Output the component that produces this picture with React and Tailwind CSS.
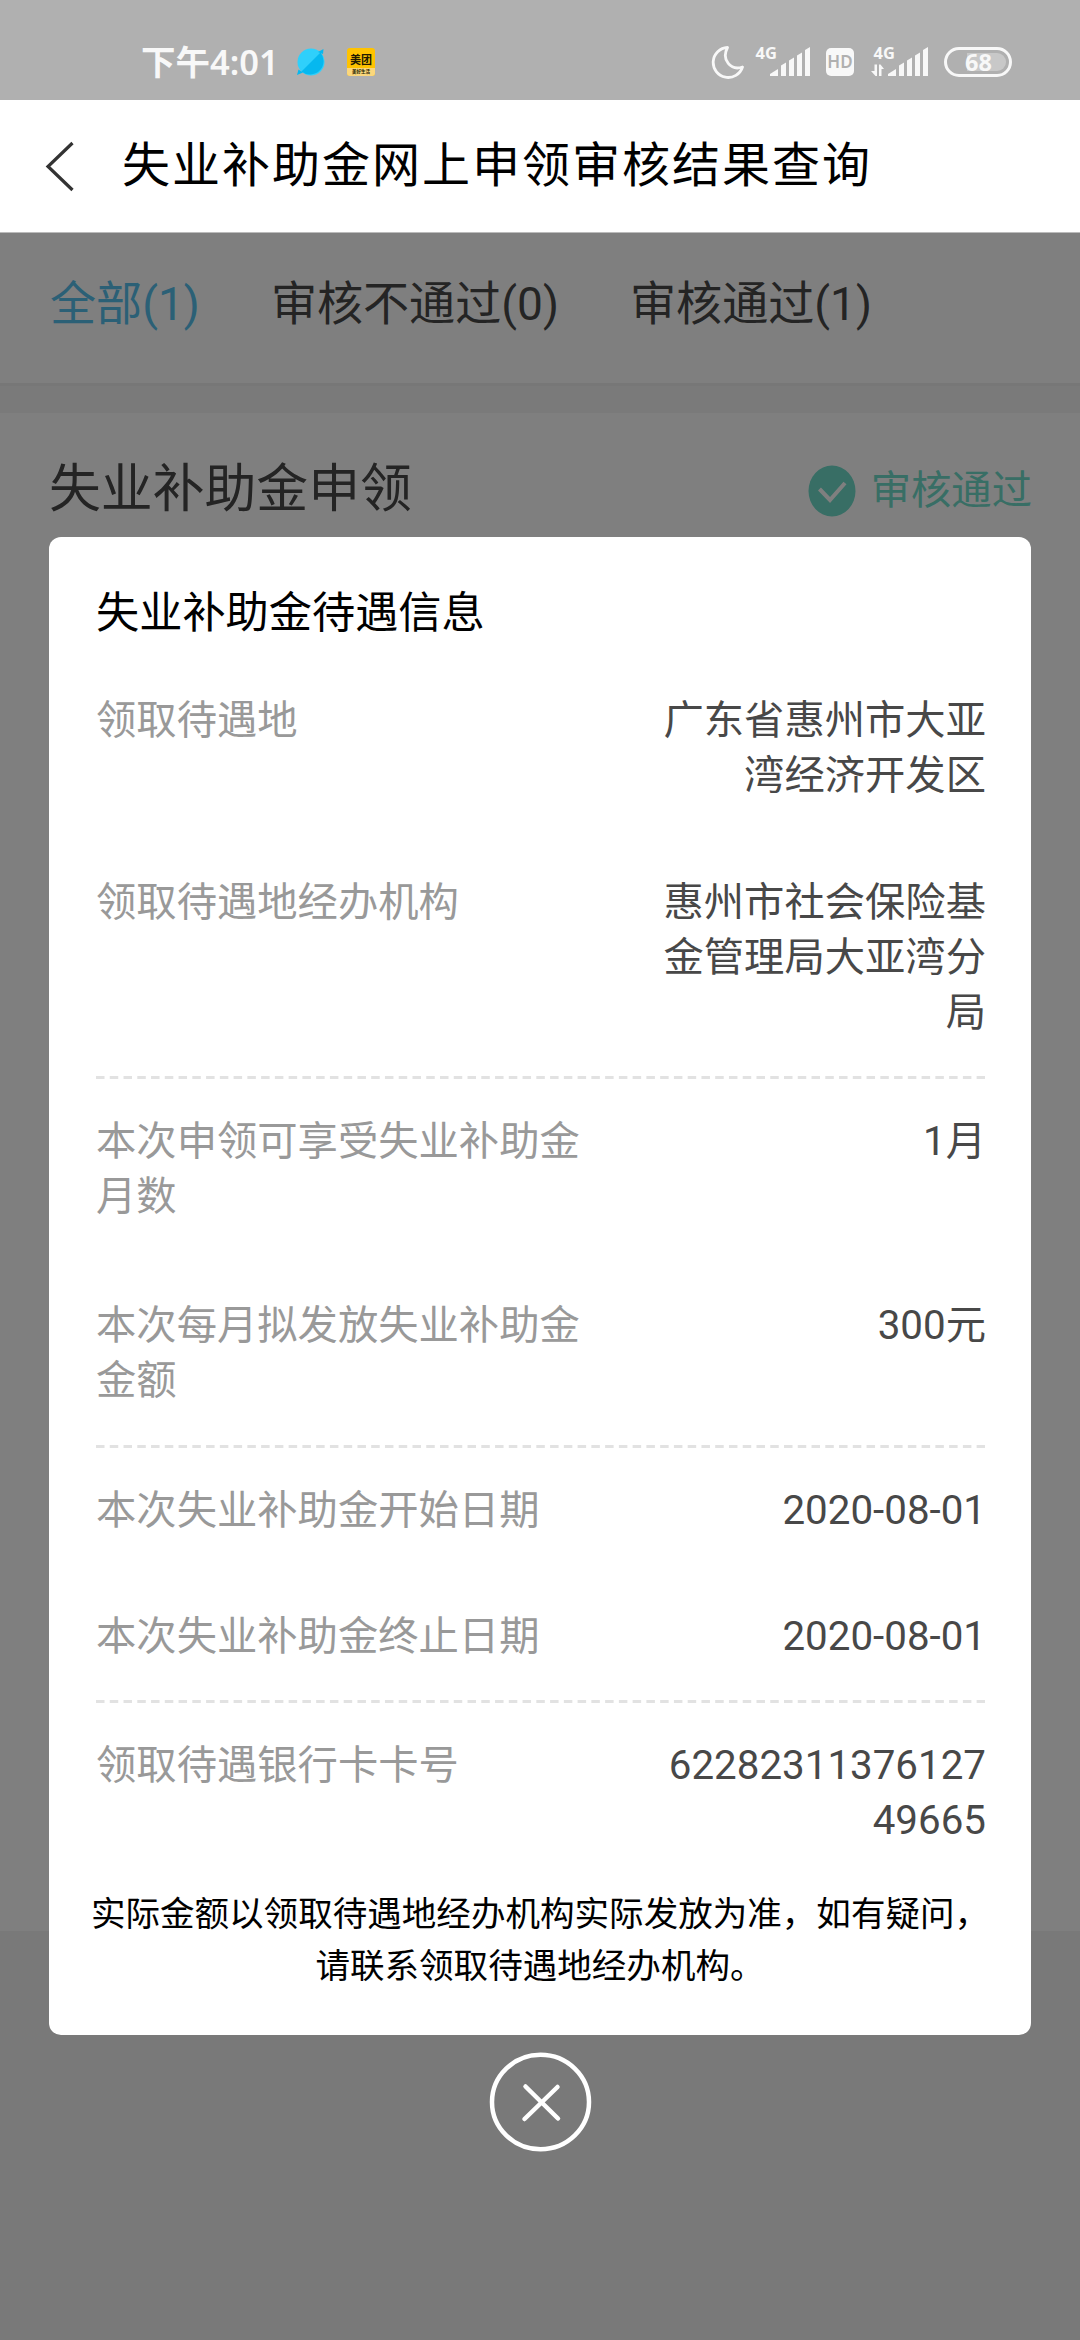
const groups = [
  [
    { label: '领取待遇地', value: '广东省惠州市大亚湾经济开发区', height: 'h-[182px]' },
    { label: '领取待遇地经办机构', value: '惠州市社会保险基金管理局大亚湾分局', height: 'h-[201px]' },
  ],
  [
    { label: '本次申领可享受失业补助金月数', value: '1月', height: 'h-[184px]' },
    { label: '本次每月拟发放失业补助金金额', value: '300元', height: 'h-[147px]' },
  ],
  [
    { label: '本次失业补助金开始日期', value: '2020-08-01', height: 'h-[126px]' },
    { label: '本次失业补助金终止日期', value: '2020-08-01', height: 'h-[91px]' },
  ],
  [{ label: '领取待遇银行卡卡号', value: '6228231137612749665', height: 'h-[150px]' }],
];

const tabs = [
  { name: '全部(1)', active: true },
  { name: '审核不通过(0)', active: false },
  { name: '审核通过(1)', active: false },
];

const Signal = ({ data }) => (
  <svg className="w-[57px] h-[54px]" viewBox="0 -10 57 54" fill="#f8f8f8">
    <text x="2.5" y="13.5" fontSize="16.5" fontWeight="700" fontFamily="Noto Sans, sans-serif">4G</text>
    <path d="M17 31v-2l8-5v7z" />
    <path d="M28 20.5l5-3V31h-5z" />
    <path d="M36 15.500l5-3V31h-5z" />
    <path d="M44 10.500l5-3V31h-5z" />
    <path d="M52 5l5-3v29h-5z" />
    {data && <path d="M3.500 19.500H6V31H4.500L0 26h3.500zM8 31V19.500h1.500L13 24h-2.500v7z" />}
  </svg>
);

const StatusBar = () => (
  <div className="h-[100px] bg-[#b0b0b0] flex items-center justify-between pt-[24px] pl-[141px] pr-[68px]">
    <div className="flex items-center">
      <span className="font-['Noto_Sans','Noto_Sans_CJK_SC',sans-serif] font-semibold text-[34.500px] leading-[50px] text-[#f8f8f8] w-[156px] whitespace-nowrap">
        下午4:01
      </span>
      <svg className="w-[28px] h-[28px]" viewBox="0 0 28 28">
        <circle cx="14" cy="14" r="13.500" fill="#2fd0fb" />
        <path d="M23.500 4.500A13.500 13.500 0 0 1 4.500 23.500z" fill="#06b8ef" />
        <path d="M21 4l5.500-3-.5 5z" fill="#06b8ef" />
        <path d="M1.500 21.500L0 27l6-2.500z" fill="#06b8ef" />
      </svg>
      <div className="ml-[22px] w-[28px] h-[28px] rounded-[3px] bg-[#ffc300] flex flex-col font-['Noto_Sans_CJK_SC',sans-serif] text-[#221a00]">
        <span className="h-[20px] pt-[3px] text-center text-[11px] leading-[17px] font-bold whitespace-nowrap">美团</span>
        <span className="h-[8px] rounded-b-[3px] bg-[#fbd77c] text-center text-[4.500px] leading-[7px] font-bold whitespace-nowrap">美好生活</span>
      </div>
    </div>
    <div className="flex items-center">
      <svg className="w-[34px] h-[34px]" viewBox="0 0 34 34" fill="none" stroke="#f8f8f8" strokeWidth="2.800" strokeLinejoin="round">
        <path d="M16.500 2.500A15 15 0 1 0 31.500 22C20 26 10 15 16.500 2.500z" />
      </svg>
      <div className="ml-[8px]"><Signal /></div>
      <div className="ml-[16px] w-[28px] h-[28px] rounded-[5px] bg-[#f8f8f8] text-[#b0b0b0] font-['Noto_Sans',sans-serif] font-semibold text-[17px] leading-[28px] flex justify-center">
        HD
      </div>
      <div className="ml-[17px]"><Signal data /></div>
      <div className="ml-[16px] w-[68px] h-[30px] rounded-full border-[3px] border-[#f8f8f8] flex items-center p-[3px]">
        <div className="w-full h-[18px] rounded-r-full bg-[linear-gradient(90deg,transparent_30%,#c8c8c8_30%)] pl-[15px] font-['Noto_Sans',sans-serif] font-bold text-[23.500px] leading-[18px] text-[#f8f8f8]">
          68
        </div>
      </div>
    </div>
  </div>
);

const Row = ({ label, value, height }) => (
  <div className={`flex justify-between text-[40.320px] leading-[55px] ${height}`}>
    <div className="w-[490px] text-[#999]">{label}</div>
    <div className="w-[324px] -mr-[2px] text-right break-all text-[#484848]">{value}</div>
  </div>
);

const App = () => {
  return (
    <div className="relative w-[1080px] h-[2340px] overflow-hidden bg-[#f2f2f2] font-['Roboto','Noto_Sans_CJK_SC',sans-serif]">
      <StatusBar />

      <div className="h-[132px] bg-white flex items-center">
        <svg className="ml-[44px] w-[32px] h-[52px]" viewBox="0 0 32 52" fill="none" stroke="#333" strokeWidth="3.200">
          <path d="M28.500 3L4 26.500L28.500 50" />
        </svg>
        <h1 className="ml-[46px] text-[48px] leading-[60px] tracking-[2px] text-black whitespace-nowrap">失业补助金网上申领审核结果查询</h1>
      </div>

      <div className="h-[151px] border-t border-[#bbb] bg-white flex gap-[71px] pl-[50px] pt-[41px] text-[46.080px] leading-[60px]">
        {tabs.map((tab) => (
          <span key={tab.name} className={tab.active ? 'text-[#56c0ec]' : 'text-[#484848]'}>{tab.name}</span>
        ))}
      </div>
      <div className="h-[30px] bg-[#f4f4f4] border-t-[3px] border-[#efefef]"></div>

      <div className="h-[1518px] bg-white flex justify-between items-start pl-[49px] pr-[48px] pt-[43px]">
        <h2 className="text-[51.840px] leading-[68px] text-[#484848]">失业补助金申领</h2>
        <div className="flex items-center h-[70px] text-[#70dcca]">
          <svg className="w-[48px] h-[52px]" viewBox="0 0 48 52">
            <ellipse cx="24" cy="26" rx="23.500" ry="25.500" fill="#70dcca" />
            <path d="M11.500 24L22 35L37 18" fill="none" stroke="#fff" strokeWidth="4" />
          </svg>
          <span className="ml-[15px] text-[40.320px] leading-[56px]">审核通过</span>
        </div>
      </div>

      {/* Dimmed layer with the benefit details */}
      <div className="absolute inset-x-0 top-[233px] bottom-0 bg-black/50 flex flex-col items-center pt-[304px]">
        <div className="w-[982px] h-[1498px] bg-white rounded-[12px] px-[47px] pt-[47px]">
          <h3 className="h-[109px] text-[43.200px] leading-[60px] text-black">失业补助金待遇信息</h3>
          {groups.map((rows, i) => (
            <div key={i}>
              {i > 0 && (
                <svg className="block w-[889px] h-[3px] mb-[35px]" viewBox="0 0 889 3">
                  <path d="M0 1.500H889" stroke="#e2e2e2" strokeWidth="3" strokeDasharray="8.500 5.260" />
                </svg>
              )}
              {rows.map((row) => (
                <Row key={row.label} {...row} />
              ))}
            </div>
          ))}
          <p className="-mx-[6px] text-center text-[34.560px] leading-[52px] text-black">
            实际金额以领取待遇地经办机构实际发放为准，如有疑问，<br />请联系领取待遇地经办机构。
          </p>
        </div>
        <svg className="mt-[16px] w-[104px] h-[102px]" viewBox="0 0 104 102" fill="none" stroke="#fff" strokeWidth="4.500" strokeLinecap="round">
          <ellipse cx="52.500" cy="51" rx="48.500" ry="47.200" />
          <path d="M37.500 35.500L70 67.500M69.500 36L36.500 68" />
        </svg>
      </div>
    </div>
  );
};

export default App;
